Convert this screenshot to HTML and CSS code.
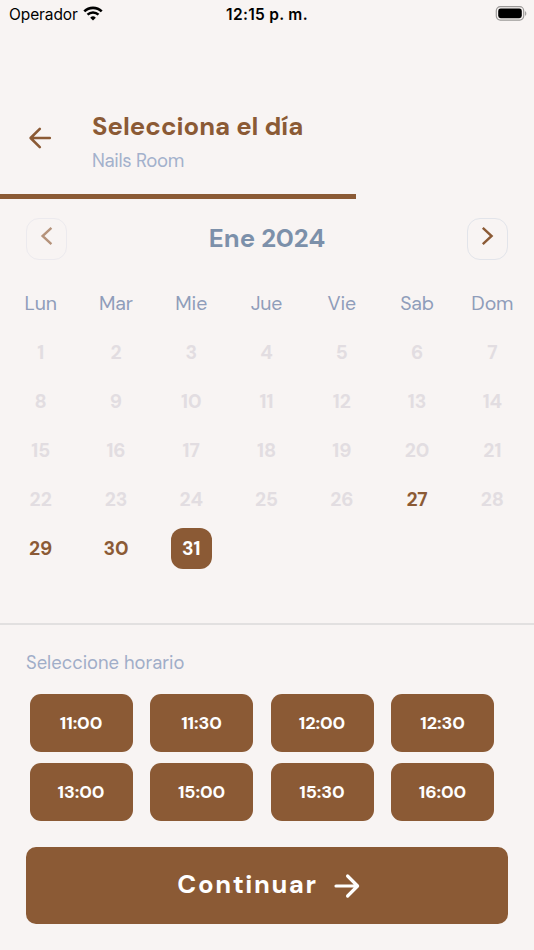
FILE: index.html
```html
<!DOCTYPE html>
<html lang="es">
<head>
    <meta charset="UTF-8">
    <meta name="viewport" content="width=device-width, initial-scale=1.0">
    <title>Selecciona el día</title>
    <link rel="stylesheet" href="styles.css">
</head>
<body>
    <div class="screen">
        <div class="status-bar">
            <div class="carrier">
                <span>Operador</span>
                <svg class="wifi" width="20" height="15" viewBox="0 0 20 15">
                    <path d="M1.3 5.4a12.4 12.4 0 0 1 17.4 0" fill="none" stroke="#000" stroke-width="2.6"/>
                    <path d="M4.5 8.7a7.8 7.8 0 0 1 11 0" fill="none" stroke="#000" stroke-width="2.4"/>
                    <path d="M10 14.6l-2.8-2.9a4 4 0 0 1 5.6 0z" fill="#000"/>
                </svg>
            </div>
            <div class="clock">12:15 p. m.</div>
            <svg class="battery" width="32" height="15" viewBox="0 0 32 15">
                <rect x="1.3" y="0.7" width="27.4" height="13.4" rx="4" fill="none" stroke="#9b9998" stroke-width="1.2"/>
                <rect x="3.2" y="2.6" width="23.6" height="9.6" rx="2.4" fill="#000"/>
                <path d="M30.1 5.2c1.6.5 1.6 4 0 4.5z" fill="#9b9998"/>
            </svg>
        </div>

        <header class="header">
            <svg class="back" width="24" height="24" viewBox="0 0 24 24">
                <path d="M11.8 2.8L2.6 12l9.2 9.2M2.8 12h19" />
            </svg>
            <div>
                <h1>Selecciona el día</h1>
                <p>Nails Room</p>
            </div>
        </header>
        <div class="progress"><div class="progress-bar"></div></div>

        <div class="month">
            <button class="nav disabled">
                <svg width="14" height="20" viewBox="0 0 14 20"><path d="M11.4 1.8L2.6 10l8.8 8.2"/></svg>
            </button>
            <h2>Ene 2024</h2>
            <button class="nav">
                <svg width="14" height="20" viewBox="0 0 14 20"><path d="M2.8 1.8l8.8 8.2-8.8 8.2"/></svg>
            </button>
        </div>

        <div class="weekdays">
            <span>Lun</span><span>Mar</span><span>Mie</span><span>Jue</span><span>Vie</span><span>Sab</span><span>Dom</span>
        </div>
        <div class="days">
            <span>1</span><span>2</span><span>3</span><span>4</span><span>5</span><span>6</span><span>7</span>
            <span>8</span><span>9</span><span>10</span><span>11</span><span>12</span><span>13</span><span>14</span>
            <span>15</span><span>16</span><span>17</span><span>18</span><span>19</span><span>20</span><span>21</span>
            <span>22</span><span>23</span><span>24</span><span>25</span><span>26</span><span class="available">27</span><span>28</span>
            <span class="available">29</span><span class="available">30</span><span class="selected">31</span>
        </div>

        <section class="schedule">
            <h3>Seleccione horario</h3>
            <div class="slots">
                <button>11:00</button>
                <button>11:30</button>
                <button>12:00</button>
                <button>12:30</button>
                <button>13:00</button>
                <button>15:00</button>
                <button>15:30</button>
                <button>16:00</button>
            </div>
            <button class="continue">
                <span>Continuar</span>
                <svg width="26" height="26" viewBox="0 0 26 26">
                    <path d="M13.6 3L23.6 13l-10 10M2 13h21" />
                </svg>
            </button>
        </section>
    </div>
</body>
</html>
```
FILE: styles.css
```css
* {
    box-sizing: border-box;
}

body {
    margin: 0;
    background: #f8f4f3;
    font-family: "DM Sans", Inter, sans-serif;
    color: #8b5a35;
}

h1, h2, h3, p {
    margin: 0;
}

button {
    padding: 0;
    border: none;
    font-family: inherit;
}

.screen {
    width: 534px;
    height: 950px;
    overflow: hidden;
}

.status-bar {
    display: grid;
    grid-template-columns: 1fr auto 1fr;
    align-items: center;
    height: 28px;
    padding: 0 7px 0 9px;
    color: #000;
    font-family: Inter, sans-serif;
    font-size: 15.5px;
}

.carrier {
    display: flex;
    align-items: center;
    gap: 5px;
    letter-spacing: -0.1px;
}

.wifi {
    margin-top: -2px;
}

.clock {
    margin-right: 2px;
    font-weight: 600;
    letter-spacing: 0.3px;
}

.battery {
    justify-self: end;
    margin-top: -2px;
}

.header {
    display: flex;
    align-items: center;
    gap: 40px;
    height: 166px;
    padding: 60px 28px 0;
}

.back {
    margin-top: -7px;
    fill: none;
    stroke: #8b5a35;
    stroke-width: 2.6;
    stroke-linecap: round;
    stroke-linejoin: round;
}

h1 {
    margin-top: 1px;
    font-size: 25.7px;
    line-height: 34px;
    font-weight: 700;
}

.header p {
    margin-top: 4px;
    color: #a3b1cc;
    font-size: 18.6px;
    letter-spacing: -0.3px;
    line-height: 26px;
}

.progress-bar {
    width: 356px;
    height: 5px;
    background: #8b5a35;
}

.month {
    display: flex;
    justify-content: space-between;
    align-items: center;
    padding: 0 26px;
    margin-top: 19px;
}

h2 {
    color: #7c90aa;
    font-size: 25.7px;
    line-height: 34px;
    font-weight: 700;
}

.nav {
    width: 41px;
    height: 42px;
    border: 1px solid #e2e4ea;
    border-radius: 13px;
    background: none;
}

.nav svg {
    display: block;
    margin: -6px auto 0;
    fill: none;
    stroke: #8b5a35;
    stroke-width: 2.4;
}

.nav.disabled {
    border-color: #eceaee;
}

.nav.disabled svg {
    stroke: #b5937b;
}

.weekdays,
.days {
    display: grid;
    grid-template-columns: repeat(7, 1fr);
    justify-items: center;
    width: 527px;
    margin-left: 3px;
}

.weekdays {
    margin-top: 30px;
    color: #8f9dba;
    font-size: 19.5px;
    letter-spacing: -0.1px;
    line-height: 28px;
}

.days {
    grid-auto-rows: 41px;
    row-gap: 8px;
    margin-top: 14px;
    color: #e2dde1;
    font-size: 19.3px;
    letter-spacing: -0.1px;
    font-weight: 700;
    line-height: 42px;
}

.days .available {
    color: #8b5a35;
}

.days .selected {
    width: 41px;
    height: 41px;
    border-radius: 12px;
    background: #8b5a35;
    color: #fff;
    text-align: center;
}

.schedule {
    height: 327px;
    margin-top: 54px;
    padding: 24px 26px 0;
    border-top: 2px solid #e2e0e0;
}

h3 {
    color: #a0adc8;
    font-size: 18.4px;
    line-height: 28px;
    font-weight: 400;
}

.slots {
    display: grid;
    grid-template-columns: repeat(4, 103px);
    grid-auto-rows: 58px;
    gap: 10.5px 17.5px;
    margin: 17px 3.5px 0;
}

.slots button {
    border-radius: 11px;
    background: #8b5a35;
    color: #fff;
    font-size: 18px;
    font-weight: 700;
    letter-spacing: -0.1px;
}

.continue {
    display: flex;
    justify-content: center;
    align-items: center;
    gap: 16px;
    width: 482px;
    height: 77px;
    margin-top: 26px;
    padding-left: 3px;
    border-radius: 10px;
    background: #8b5a35;
    color: #fff;
    font-size: 25.7px;
    font-weight: 700;
    letter-spacing: 1.6px;
}

.continue span {
    margin-top: -2px;
}

.continue svg {
    margin-top: 1px;
    fill: none;
    stroke: #fff;
    stroke-width: 3.2;
    stroke-linecap: round;
    stroke-linejoin: round;
}
```
